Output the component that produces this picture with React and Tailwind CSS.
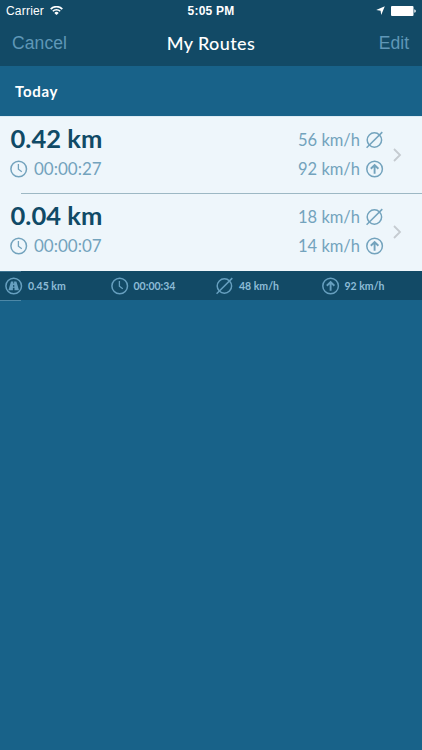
const routes = [
  { distance: "0.42 km", time: "00:00:27", average: "56 km/h", max: "92 km/h" },
  { distance: "0.04 km", time: "00:00:07", average: "18 km/h", max: "14 km/h" },
];

function Icon({ children }) {
  return (
    <svg
      className="size-[18px] shrink-0"
      viewBox="0 0 18 18"
      fill="none"
      stroke="currentColor"
      strokeWidth="1.5"
    >
      {children}
    </svg>
  );
}

function ClockIcon() {
  return (
    <Icon>
      <circle cx="8.7" cy="9" r="7.8" />
      <path d="M8.4 3.9v5.3l3.4 2.5" strokeWidth="1.3" />
    </Icon>
  );
}

function AverageIcon() {
  return (
    <Icon>
      <circle cx="8.4" cy="9" r="7.2" />
      <path d="M.6 16.8L16.3 1.1" />
    </Icon>
  );
}

function MaxIcon() {
  return (
    <Icon>
      <circle cx="8.6" cy="9" r="7.8" />
      <path d="M8.6 13.7V5.2M4.8 8.7L8.6 5l3.8 3.7" strokeWidth="1.9" />
    </Icon>
  );
}

function RoadIcon() {
  return (
    <Icon>
      <circle cx="8.7" cy="9" r="7.8" />
      <path
        d="M6 4.6h2.3v2h.8v-2h2.3l2.6 8.6H9.5v-2.4H7.9v2.4H3.4zM8.2 7.9L8 9.7h1.4l-.2-1.8z"
        fill="currentColor"
        fillRule="evenodd"
        stroke="none"
      />
    </Icon>
  );
}

function StatusBar() {
  return (
    <div className="relative flex h-5 items-center justify-between pr-[6px] pl-[6px] text-[12px] text-white">
      <div className="flex items-center gap-[6px] pt-[2px]">
        <span className="tracking-[0.2px]">Carrier</span>
        <svg className="mb-[2px] h-[9px] w-[13px]" viewBox="0 0 13 9" fill="none" stroke="currentColor">
          <path d="M.7 3.1a8.2 8.2 0 0 1 11.6 0" strokeWidth="1.7" />
          <path d="M2.8 5.3a5.2 5.2 0 0 1 7.4 0" strokeWidth="1.6" />
          <path d="M6.5 9L4.3 6.9a3 3 0 0 1 4.4 0z" fill="currentColor" stroke="none" />
        </svg>
      </div>
      <span className="absolute inset-x-0 top-[2px] text-center font-bold tracking-[0.2px]">
        5:05 PM
      </span>
      <div className="flex items-center gap-[6px] pt-px">
        <svg className="size-[9px]" viewBox="0 0 9 9" fill="currentColor">
          <path d="M8.8.3L5.2 8.9 4.6 4.7.2 4.1z" />
        </svg>
        <svg className="h-[10px] w-[25px]" viewBox="0 0 25 10" fill="currentColor">
          <rect width="22.5" height="10" rx="1" />
          <path d="M23.3 3.2q1.5.4 1.5 1.8t-1.5 1.8z" />
        </svg>
      </div>
    </div>
  );
}

function RouteRow({ route }) {
  return (
    <div className="flex h-[77px] justify-between pr-5 pl-[10px] text-[#73a3bd]">
      <div>
        <div className="mt-[7px] h-[31px] pl-[0.5px] text-[25.5px] leading-[31px] font-bold tracking-[0.05px] text-[#104a66]">
          {route.distance}
        </div>
        <div className="mt-[5px] flex h-5 items-center gap-[6px] text-[17px] leading-5">
          <ClockIcon />
          <span>{route.time}</span>
        </div>
      </div>
      <div className="flex items-center gap-2">
        <div className="flex h-full flex-col items-end gap-[9px] pt-[13.5px] text-[16.5px] leading-5">
          <div className="flex h-5 items-center gap-[6px]">
            <span>{route.average}</span>
            <AverageIcon />
          </div>
          <div className="flex h-5 items-center gap-[6px]">
            <span>{route.max}</span>
            <MaxIcon />
          </div>
        </div>
        <svg className="h-[14px] w-[10px] text-[#c5cbd0]" viewBox="0 0 10 14" fill="none" stroke="currentColor" strokeWidth="1.8">
          <path d="M2 1l6 6-6 6" />
        </svg>
      </div>
    </div>
  );
}

function Total({ icon, children }) {
  return (
    <div className="flex items-center gap-[5px] pl-[5px]">
      <span className="text-[#669fbf]">{icon}</span>
      <span className="pt-[3px]">{children}</span>
    </div>
  );
}

export default function App() {
  return (
    <div className="h-[750px] w-[422px] overflow-hidden bg-[#186289] font-['Lato',sans-serif]">
      <header className="h-[66px] bg-[#124a66] font-['Liberation_Sans',sans-serif]">
        <StatusBar />
        <div className="grid h-[46px] grid-cols-3 items-center px-3 text-[17.5px] text-[#5f97b7]">
          <span className="tracking-[0.1px]">Cancel</span>
          <span className="text-center font-['Lato',sans-serif] text-[18px] font-medium tracking-[0.4px] text-white">
            My Routes
          </span>
          <span className="pr-px text-right">Edit</span>
        </div>
      </header>
      <h2 className="flex h-[50px] items-center pl-[15px] text-[15px] font-bold tracking-[0.7px] text-white">
        Today
      </h2>
      <main className="h-[155px] border-t border-[#dcebf4] bg-[#eef6fb]">
        <div className="-mt-px">
          <RouteRow route={routes[0]} />
        </div>
        <div className="ml-[21px] h-px bg-[#9db8c4]" />
        <div className="-mt-px">
          <RouteRow route={routes[1]} />
        </div>
      </main>
      <footer className="h-[29px] bg-[#124a66]">
        <div className="h-px w-[21px] bg-[#3b7391]" />
        <div className="-mt-px grid h-7 grid-cols-4 items-center pt-px text-[10.5px] font-bold text-[#8dbcd7]">
          <Total icon={<RoadIcon />}>0.45 km</Total>
          <Total icon={<ClockIcon />}>00:00:34</Total>
          <Total icon={<AverageIcon />}>48 km/h</Total>
          <Total icon={<MaxIcon />}>92 km/h</Total>
        </div>
      </footer>
      <div className="h-px w-[21px] bg-[#4d88a7]" />
    </div>
  );
}
